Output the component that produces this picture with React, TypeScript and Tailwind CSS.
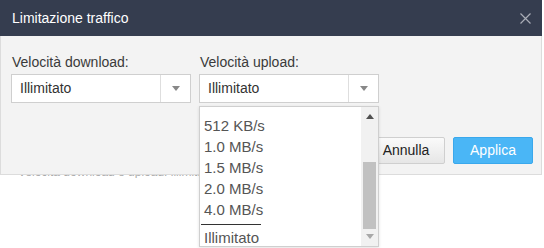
import React from "react";

const speeds = ["512 KB/s", "1.0 MB/s", "1.5 MB/s", "2.0 MB/s", "4.0 MB/s"];

function Caret({ up = false, color = "#888" }: { up?: boolean; color?: string }) {
  return (
    <svg width="8" height="5" viewBox="0 0 8 5">
      <path d={up ? "M0 5 L4 0 L8 5 Z" : "M0 0 L8 0 L4 5 Z"} fill={color} />
    </svg>
  );
}

function Select({ value }: { value: string }) {
  return (
    <div className="flex h-[29px] w-[180px] items-stretch border border-[#cfcfcf] bg-white">
      <div className="flex flex-1 items-center pl-[8px] text-[14px] text-[#333]">{value}</div>
      <div className="flex w-[30px] items-center justify-center border-l border-[#dedede]">
        <Caret />
      </div>
    </div>
  );
}

function SpeedMenu() {
  return (
    <div className="absolute left-0 top-[54px] z-10 flex h-[141px] w-[180px] overflow-hidden border border-[#cfcfcf] bg-white shadow-[0_1px_3px_rgba(0,0,0,0.12)]">
      <div className="flex-1 pt-[8px] text-[15px] leading-[21px] text-[#555]">
        {speeds.map((s) => (
          <div key={s} className="pl-[4px]">
            {s}
          </div>
        ))}
        <div className="mb-[2px] ml-[1px] mt-[4px] h-px w-[60px] bg-[#333]" />
        <div className="pl-[4px]">Illimitato</div>
      </div>
      <div className="flex w-[17px] flex-col items-center bg-[#f1f1f1]">
        <div className="flex h-[17px] items-center justify-center pt-[2px]">
          <Caret up color="#505050" />
        </div>
        <div className="flex-1" />
        <div className="h-[67px] w-[13px] bg-[#c1c1c1]" />
        <div className="flex h-[17px] items-center justify-center pb-[2px]">
          <Caret color="#a8a8a8" />
        </div>
      </div>
    </div>
  );
}

export default function App() {
  return (
    <div className="h-[248px] w-[544px] overflow-hidden bg-white font-['Liberation_Sans',Arial,sans-serif]">
      <div className="w-[542px]">
        <div className="flex h-[36px] items-center justify-between bg-[#353d4f] pl-[12px] pr-[10px]">
          <span className="text-[14px] text-white">Limitazione traffico</span>
          <svg width="11" height="11" viewBox="0 0 11 11" className="mr-[1px]">
            <path d="M0.5 0.5 L10.5 10.5 M10.5 0.5 L0.5 10.5" stroke="#a9adb6" strokeWidth="1.2" />
          </svg>
        </div>
        <div className="border-x border-b border-[#dcdcdc] bg-[#f3f3f3] pb-[10px] pt-[16px]">
          <div className="flex gap-[8px] pl-[10px]">
            <div>
              <div className="mb-[2px] pl-[1px] text-[14px] leading-[20px] text-[#3a3a3a]">Velocità download:</div>
              <Select value="Illimitato" />
            </div>
            <div className="relative">
              <div className="mb-[2px] pl-[1px] text-[14px] leading-[20px] text-[#3a3a3a]">Velocità upload:</div>
              <Select value="Illimitato" />
              <SpeedMenu />
            </div>
          </div>
          <div className="mt-[34px] flex justify-end gap-[8px] pr-[8px]">
            <button className="h-[27px] w-[78px] rounded-[2px] border border-[#cfcfcf] bg-gradient-to-b from-[#fafafa] to-[#e6e6e6] text-[14px] text-[#222]">
              Annulla
            </button>
            <button className="h-[27px] w-[80px] rounded-[2px] border border-[#3aa8ec] bg-[#4ab6f6] text-[14px] text-white">
              Applica
            </button>
          </div>
        </div>
        <div className="h-[3px] overflow-hidden pl-[18px]">
          <div className="-mt-[11px] text-[12px] leading-[16px] text-[#aaa]">
            Velocità download e upload: illimitato
          </div>
        </div>
      </div>
    </div>
  );
}
